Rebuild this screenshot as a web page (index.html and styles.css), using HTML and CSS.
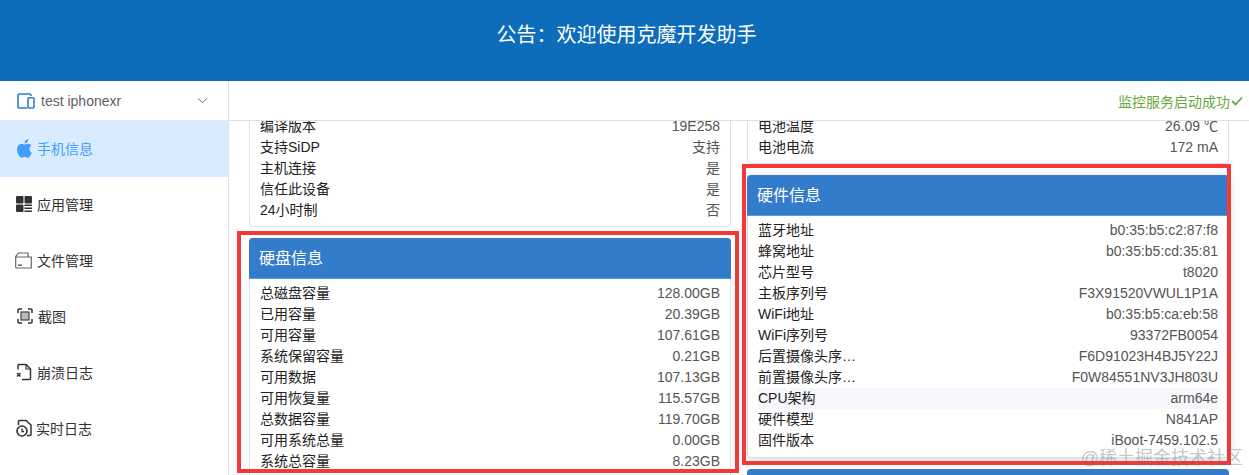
FILE: index.html
```html
<!DOCTYPE html>
<html lang="zh">
<head>
<meta charset="utf-8">
<title>克魔开发助手</title>
<link rel="stylesheet" href="styles.css">
</head>
<body>
<header class="banner">公告：欢迎使用克魔开发助手</header>
<div class="app">
  <aside class="sidebar">
    <div class="device">
      <svg class="device-icon" viewBox="0 0 18 16" width="18" height="16"><path d="M14 3V2.2A1.2 1.2 0 0 0 12.8 1H2.2A1.2 1.2 0 0 0 1 2.200V13.800A1.200 1.200 0 0 0 2.200 15H10" fill="none" stroke="#2f7fd0" stroke-width="1.600"/><rect x="11" y="4.800" width="6" height="10.200" rx="1" fill="none" stroke="#2f7fd0" stroke-width="1.600"/></svg>
      <span class="device-name">test iphonexr</span>
      <svg class="chevron" viewBox="0 0 12 8" width="11" height="7"><path d="M1 1.500L6 6.500L11 1.500" fill="none" stroke="#606266" stroke-width="1.100"/></svg>
    </div>
    <nav class="menu">
      <a class="menu-item active">
        <svg class="menu-icon icon-apple" viewBox="1 0.900 14 16.300" width="16" height="19"><path d="M11.900 9.500c0-2 1.600-2.900 1.700-3-0.900-1.400-2.400-1.600-2.900-1.600-1.200-0.100-2.400 0.700-3 0.700-0.600 0-1.600-0.700-2.600-0.700C3.700 5 2.400 5.700 1.700 7 0.300 9.500 1.300 13.100 2.700 15.100c0.700 1 1.400 2 2.500 2 1 0 1.400-0.600 2.600-0.600s1.500 0.600 2.600 0.600c1.100 0 1.800-1 2.400-2 0.800-1.100 1.100-2.200 1.100-2.300-0.100 0-2-0.800-2-3.300zM10 3.400c0.500-0.700 0.900-1.600 0.800-2.500-0.800 0-1.700 0.500-2.300 1.200-0.500 0.600-0.900 1.500-0.800 2.400 0.900 0.100 1.700-0.400 2.300-1.100z" fill="#409eff"/></svg>
        <span>手机信息</span>
      </a>
      <a class="menu-item">
        <svg class="menu-icon" viewBox="0 0 16 16" width="16" height="16"><rect x="0" y="0" width="7.500" height="7.500" rx="1" fill="#333"/><rect x="0" y="8.500" width="7.500" height="7.500" rx="1" fill="#333"/><rect x="8.500" y="0" width="7.500" height="7.500" rx="1" fill="#333"/><path d="M8.500 9.300H16M8.500 12.300H16M8.500 15.300H16" stroke="#333" stroke-width="1.400"/></svg>
        <span>应用管理</span>
      </a>
      <a class="menu-item">
        <svg class="menu-icon icon-folder" viewBox="0 0 17 17" width="17" height="17"><path d="M0.700 16V4.500L3.500 1H13V5M0.700 5H16.300V16H0.700" fill="none" stroke="#666" stroke-width="1.200"/><path d="M3 13.200H7" stroke="#555" stroke-width="1.400"/></svg>
        <span>文件管理</span>
      </a>
      <a class="menu-item">
        <svg class="menu-icon icon-shot" viewBox="0 0 16 16" width="16" height="16"><path d="M1 5V2A1 1 0 0 1 2 1H5M11 1H14A1 1 0 0 1 15 2V5M15 11V14A1 1 0 0 1 14 15H11M5 15H2A1 1 0 0 1 1 14V11" fill="none" stroke="#333" stroke-width="1.500"/><rect x="4" y="4" width="8" height="8" fill="#bbb" stroke="#444" stroke-width="1.200"/></svg>
        <span>截图</span>
      </a>
      <a class="menu-item">
        <svg class="menu-icon" viewBox="0 0 16 18" width="16" height="18"><path d="M2 6.500V2.500A1 1 0 0 1 3 1.500H10L14.500 6V15.500A1 1 0 0 1 13.500 16.500H6" fill="none" stroke="#333" stroke-width="1.500"/><path d="M10 1.500V6H14.500" fill="none" stroke="#333" stroke-width="1.200"/><path d="M1 10L4.500 13.500M4.500 10L1 13.500" stroke="#333" stroke-width="1.500"/></svg>
        <span>崩溃日志</span>
      </a>
      <a class="menu-item">
        <svg class="menu-icon icon-live" viewBox="0 0 16 18" width="16" height="18"><path d="M2.500 6V2.500A1 1 0 0 1 3.500 1.500H10L15 6V15.500A1 1 0 0 1 14 16.500H11" fill="none" stroke="#333" stroke-width="1.500"/><circle cx="6" cy="12" r="5" fill="#fff" stroke="#333" stroke-width="1.600"/><path d="M6 9.500V12.500H8" fill="none" stroke="#333" stroke-width="1.300"/></svg>
        <span>实时日志</span>
      </a>
    </nav>
  </aside>
  <main class="main">
    <div class="toolbar">
      <span class="status">监控服务启动成功</span>
      <svg class="status-check" viewBox="0 0 12 10" width="12" height="10"><path d="M1 5L4.500 8.500L11 1.500" fill="none" stroke="#67a83c" stroke-width="1.800"/></svg>
    </div>
    <div class="content">
      <div class="column">
        <section class="card">
          <div class="rows">
            <div class="row"><span class="k">编译版本</span><span class="v">19E258</span></div>
            <div class="row"><span class="k">支持SiDP</span><span class="v">支持</span></div>
            <div class="row"><span class="k">主机连接</span><span class="v">是</span></div>
            <div class="row"><span class="k">信任此设备</span><span class="v">是</span></div>
            <div class="row"><span class="k">24小时制</span><span class="v">否</span></div>
          </div>
        </section>
        <section class="card titled">
          <h2 class="card-title">硬盘信息</h2>
          <div class="rows">
            <div class="row"><span class="k">总磁盘容量</span><span class="v">128.00GB</span></div>
            <div class="row"><span class="k">已用容量</span><span class="v">20.39GB</span></div>
            <div class="row"><span class="k">可用容量</span><span class="v">107.61GB</span></div>
            <div class="row"><span class="k">系统保留容量</span><span class="v">0.21GB</span></div>
            <div class="row"><span class="k">可用数据</span><span class="v">107.13GB</span></div>
            <div class="row"><span class="k">可用恢复量</span><span class="v">115.57GB</span></div>
            <div class="row"><span class="k">总数据容量</span><span class="v">119.70GB</span></div>
            <div class="row"><span class="k">可用系统总量</span><span class="v">0.00GB</span></div>
            <div class="row"><span class="k">系统总容量</span><span class="v">8.23GB</span></div>
          </div>
        </section>
      </div>
      <div class="column">
        <section class="card">
          <div class="rows">
            <div class="row"><span class="k">电池温度</span><span class="v">26.09 ℃</span></div>
            <div class="row"><span class="k">电池电流</span><span class="v">172 mA</span></div>
          </div>
        </section>
        <section class="card titled raised">
          <h2 class="card-title">硬件信息</h2>
          <div class="rows">
            <div class="row"><span class="k">蓝牙地址</span><span class="v">b0:35:b5:c2:87:f8</span></div>
            <div class="row"><span class="k">蜂窝地址</span><span class="v">b0:35:b5:cd:35:81</span></div>
            <div class="row"><span class="k">芯片型号</span><span class="v">t8020</span></div>
            <div class="row"><span class="k">主板序列号</span><span class="v">F3X91520VWUL1P1A</span></div>
            <div class="row"><span class="k">WiFi地址</span><span class="v">b0:35:b5:ca:eb:58</span></div>
            <div class="row"><span class="k">WiFi序列号</span><span class="v">93372FB0054</span></div>
            <div class="row"><span class="k">后置摄像头序…</span><span class="v">F6D91023H4BJ5Y22J</span></div>
            <div class="row"><span class="k">前置摄像头序…</span><span class="v">F0W84551NV3JH803U</span></div>
            <div class="row hover"><span class="k">CPU架构</span><span class="v">arm64e</span></div>
            <div class="row"><span class="k">硬件模型</span><span class="v">N841AP</span></div>
            <div class="row"><span class="k">固件版本</span><span class="v">iBoot-7459.102.5</span></div>
          </div>
        </section>
        <section class="card titled next">
          <h2 class="card-title">&nbsp;</h2>
        </section>
      </div>
    </div>
  </main>
</div>
<div class="mark mark-left"></div>
<div class="mark mark-right"></div>
<div class="watermark">@稀土掘金技术社区</div>
</body>
</html>
```
FILE: styles.css
```css
* { box-sizing: border-box; }
html, body { height: 100%; }
body {
  margin: 0;
  height: 475px;
  overflow: hidden;
  display: flex;
  flex-direction: column;
  position: relative;
  background: #fff;
  color: #303133;
  font-family: "Liberation Sans", "Noto Sans CJK SC", sans-serif;
  font-size: 14px;
}
.banner {
  flex: none;
  height: 81px;
  display: flex;
  align-items: center;
  justify-content: center;
  padding: 0 0 11px 4px;
  background: #0d6dbb;
  color: #fff;
  font-size: 20px;
  line-height: 28px;
}
.app { flex: 1; min-height: 0; display: flex; }
.sidebar {
  flex: none;
  width: 229px;
  border-right: 1px solid #dcdfe6;
  display: flex;
  flex-direction: column;
}
.device {
  flex: none;
  height: 40px;
  display: flex;
  align-items: center;
  padding: 0 20px 0 17px;
  border-bottom: 1px solid #e4e7ed;
  color: #606266;
}
.device-name { margin-left: 6px; flex: 1; }
.menu { display: flex; flex-direction: column; }
.menu-item {
  height: 56px;
  display: flex;
  align-items: center;
  gap: 5px;
  padding-left: 16px;
  padding-bottom: 2px;
  color: #303133;
  font-size: 14px;
}
.menu-item.active { background: #d9ebff; color: #409eff; }
.menu-icon { flex: none; }
.icon-apple { margin-left: 1px; margin-right: -1px; }
.icon-folder { margin-left: -1px; }
.icon-shot { margin-left: 1px; }
.icon-live { margin-right: -1px; }
.main { flex: 1; min-width: 0; display: flex; flex-direction: column; }
.toolbar {
  flex: none;
  height: 40px;
  display: flex;
  align-items: center;
  justify-content: flex-end;
  padding-right: 6px;
  border-bottom: 1px solid #dcdfe6;
  color: #67a83c;
  font-size: 14px;
}
.status-check { margin-left: 1px; }
.content {
  flex: 1;
  min-height: 0;
  overflow: hidden;
  display: grid;
  grid-template-columns: 482px 482px;
  column-gap: 16px;
  padding-left: 20px;
  align-items: start;
}
.column { display: flex; flex-direction: column; margin-top: -5px; gap: 11px; }
.card {
  border: 1px solid #dcdfe6;
  border-top: 0;
  border-radius: 0 0 4px 4px;
  background: #fff;
}
.card.titled { border-radius: 4px; }
.card.raised { box-shadow: 0 2px 12px rgba(0, 0, 0, .15); }
.card.next { border: 0; }
.card-title {
  margin: 0 -1px;
  height: 41px;
  display: flex;
  align-items: center;
  padding-left: 10px;
  padding-bottom: 3px;
  background: #337ccc;
  border-radius: 4px 4px 0 0;
  border-bottom: 1px solid #5a9ad8;
  color: #fff;
  font-size: 16px;
  font-weight: 400;
}
.card.next .card-title { margin: 0; }
.rows { padding: 0 10px 5px; }
.titled .rows { padding-top: 4px; padding-bottom: 6px; }
.row {
  height: 21px;
  line-height: 21px;
  display: flex;
  justify-content: space-between;
}
.k { color: #222; }
.v { color: #555; }
.row.hover { background: #f5f7fa; }
.mark {
  position: absolute;
  border: 4px solid #f53838;
  pointer-events: none;
}
.mark-left { left: 237px; top: 231px; width: 502px; height: 242px; }
.mark-right { left: 742px; top: 164px; width: 489px; height: 301px; }
.watermark {
  position: absolute;
  right: 6px;
  bottom: 5px;
  color: rgba(110, 110, 110, .4);
  font-size: 18px;
  line-height: 24px;
}
```
